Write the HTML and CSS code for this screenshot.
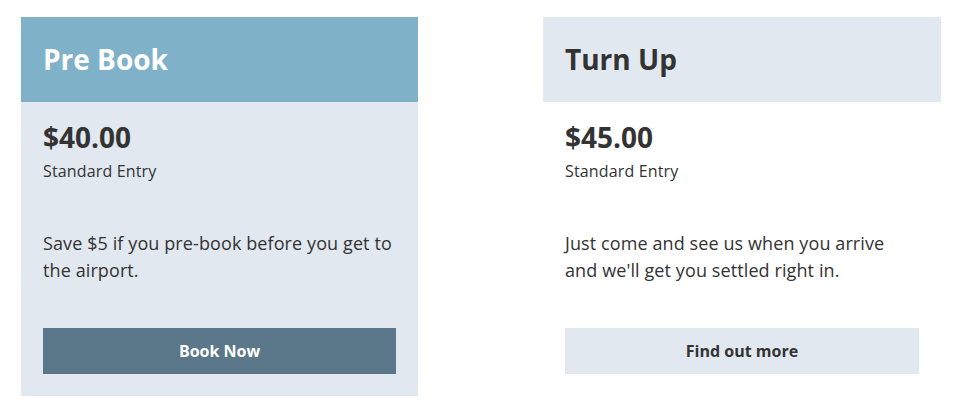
FILE: index.html
```html
<!DOCTYPE html>
<html lang="en">
<head>
    <meta charset="UTF-8">
    <meta name="viewport" content="width=device-width, initial-scale=1.0">
    <title>Parking Prices</title>
    <link rel="stylesheet" href="styles.css">
</head>
<body>
    <div class="pricing">
        <div class="card card-featured">
            <div class="card-header">
                <h2>Pre Book</h2>
            </div>
            <div class="card-body">
                <div class="price">$40.00</div>
                <div class="price-label">Standard Entry</div>
                <p class="description">Save $5 if you pre-book before you get to the airport.</p>
                <a href="#" class="button">Book Now</a>
            </div>
        </div>
        <div class="card">
            <div class="card-header">
                <h2>Turn Up</h2>
            </div>
            <div class="card-body">
                <div class="price">$45.00</div>
                <div class="price-label">Standard Entry</div>
                <p class="description">Just come and see us when you arrive and we'll get you settled right in.</p>
                <a href="#" class="button">Find out more</a>
            </div>
        </div>
    </div>
</body>
</html>
```

FILE: styles.css
```css
body {
    margin: 0;
    font-family: "Open Sans", Arial, sans-serif;
    color: #333333;
    background: #ffffff;
}
.pricing {
    display: flex;
    justify-content: space-between;
    padding: 17px 21px;
}
.card {
    width: 398px;
    background: #ffffff;
}
.card-header {
    height: 85px;
    padding: 0 22px;
    background: #e1e8ef;
}
.card-header h2 {
    margin: 0;
    font-size: 28px;
    font-weight: 700;
    line-height: 85px;
    color: #333333;
}
.card-body {
    padding: 18px 22px 22px;
}
.price {
    font-size: 28px;
    font-weight: 700;
    line-height: 34px;
}
.price-label {
    margin-top: 5px;
    font-size: 16px;
    line-height: 24px;
    letter-spacing: 0.15px;
}
.description {
    margin: 47px 0 0;
    font-size: 18px;
    line-height: 27px;
    letter-spacing: 0.1px;
}
.button {
    display: block;
    margin-top: 44px;
    height: 46px;
    line-height: 46px;
    text-align: center;
    font-size: 16px;
    font-weight: 700;
    text-decoration: none;
    color: #333333;
    background: #e1e8ef;
}
.card-featured {
    width: 397px;
    background: #e1e8ef;
}
.card-featured .card-header {
    background: #7fb1c9;
}
.card-featured .card-header h2 {
    color: #ffffff;
}
.card-featured .button {
    color: #ffffff;
    background: #5a7889;
}
```
